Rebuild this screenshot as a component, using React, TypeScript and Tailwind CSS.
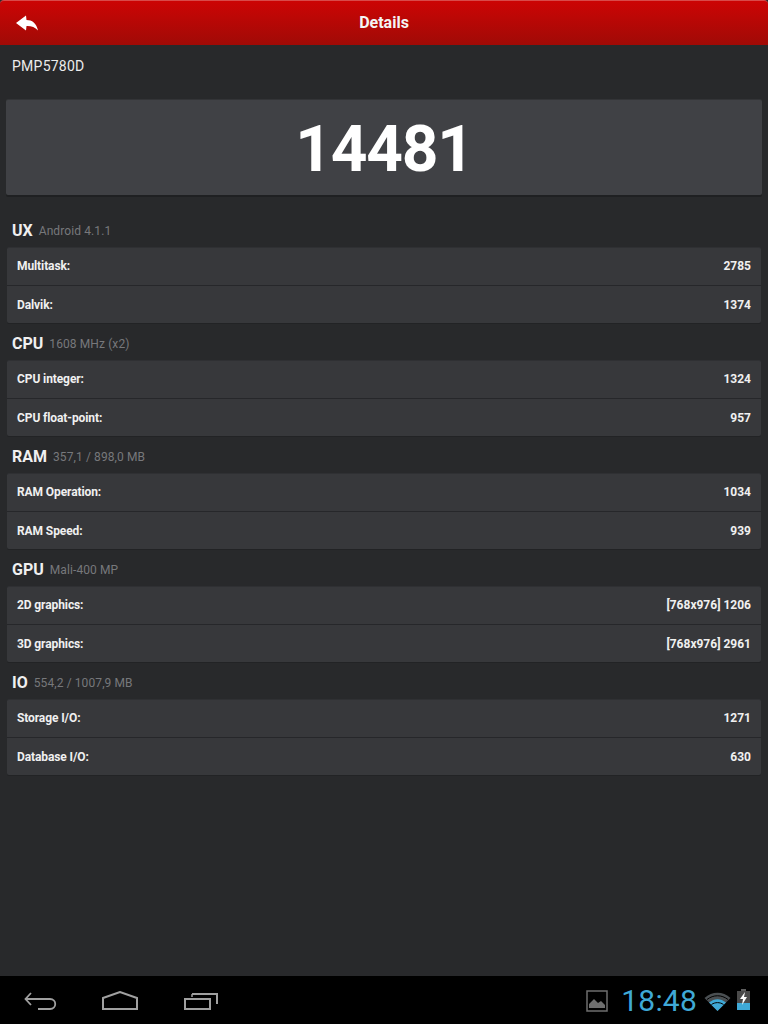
const sections = [
  {
    title: "UX",
    sub: "Android 4.1.1",
    rows: [
      ["Multitask:", "2785"],
      ["Dalvik:", "1374"],
    ],
  },
  {
    title: "CPU",
    sub: "1608 MHz (x2)",
    rows: [
      ["CPU integer:", "1324"],
      ["CPU float-point:", "957"],
    ],
  },
  {
    title: "RAM",
    sub: "357,1 / 898,0 MB",
    rows: [
      ["RAM Operation:", "1034"],
      ["RAM Speed:", "939"],
    ],
  },
  {
    title: "GPU",
    sub: "Mali-400 MP",
    rows: [
      ["2D graphics:", "[768x976] 1206"],
      ["3D graphics:", "[768x976] 2961"],
    ],
  },
  {
    title: "IO",
    sub: "554,2 / 1007,9 MB",
    rows: [
      ["Storage I/O:", "1271"],
      ["Database I/O:", "630"],
    ],
  },
];

function Section({ title, sub, rows }: (typeof sections)[number]) {
  return (
    <div>
      <div className="flex h-[37px] items-center gap-[6px] pl-3 pt-[5px]">
        <span className="text-[16px] font-bold text-[#f0f0f0]">{title}</span>
        <span className="text-[12px] tracking-[0.1px] text-[#77787b]">{sub}</span>
      </div>
      <div className="mx-[7px] rounded-[2px] border-t border-[#2f3033] bg-[#37383b] shadow-[0_1px_0_#222325]">
        {rows.map(([label, value], i) => (
          <div
            key={label}
            className={`flex items-center justify-between pl-[10px] pr-[10px] text-[12px] font-bold text-[#f0f0f0] ${
              i === 0 ? "h-[38px] border-b border-[#26272a] pb-[2px]" : "h-[37px]"
            }`}
          >
            <span className="tracking-[-0.1px]">{label}</span>
            <span>{value}</span>
          </div>
        ))}
      </div>
    </div>
  );
}

export default function App() {
  return (
    <div className="flex h-[1024px] w-[768px] flex-col overflow-hidden bg-[#28292b] font-['Roboto',sans-serif]">
      <div className="relative flex h-[45px] items-center justify-center rounded-t-[4px] border-t border-[#d84a4a] bg-gradient-to-b from-[#cc0404] to-[#a00a06]">
        <svg className="absolute left-[15px] top-[14px]" width="24" height="17" viewBox="0 0 24 17">
          <path d="M1 8 L11 0.5 L11.5 5 C17 5 21.5 8 23 15.5 C20 12 16 10.8 11.5 11 L11 15.5 Z" fill="#ffffff" />
        </svg>
        <span className="text-[16px] font-bold text-[#f4f4f4]">Details</span>
      </div>

      <div className="flex h-[55px] items-start pl-3 pt-[11px] text-[14px] tracking-[0.25px] text-[#ececec]">PMP5780D</div>

      <div className="mx-[6px] flex h-[95px] items-center justify-center rounded-[2px] bg-[#404145] pt-[5px] shadow-[0_-1px_0_#333437,0_2px_0_#1f2022]">
        <span className="text-[64px] font-bold tracking-[-1.2px] text-white">14481</span>
      </div>

      <div className="mt-[15px] flex flex-col">
        {sections.map((s) => (
          <Section key={s.title} {...s} />
        ))}
      </div>

      <div className="mt-auto flex h-[48px] items-center justify-between bg-black pl-[24px] pr-[17px] pt-[2px]">
        <div className="flex items-center gap-[44px]">
          <svg width="34" height="20" viewBox="0 0 34 20" fill="none" stroke="#a0a0a0" strokeWidth="1.8">
            <path d="M7 2 L1.5 8 L7 14 M1.5 8 H26 C33 8 33 18 26 18 H14" />
          </svg>
          <svg width="38" height="20" viewBox="0 0 38 20" fill="none" stroke="#a0a0a0" strokeWidth="2">
            <path d="M1 7 L18 1 L35 7 V18 H1 Z" />
          </svg>
          <svg width="35" height="20" viewBox="0 0 35 20" fill="none" stroke="#a0a0a0" strokeWidth="2">
            <path d="M1 8 H26 V18 H1 Z" />
            <path d="M8 3 H33 V13" />
            <path d="M8 3 V6" strokeWidth="1.5" />
          </svg>
        </div>
        <div className="flex items-center">
          <svg width="22" height="22" viewBox="0 0 22 22">
            <rect x="1" y="1" width="20" height="20" fill="none" stroke="#6e6e6e" strokeWidth="1.5" />
            <path d="M3 18 V14 L8 9 L12 13 L15 11 L19 15 V18 Z" fill="#6e6e6e" />
          </svg>
          <span className="ml-[13px] text-[30px] leading-none tracking-[0.2px] text-[#3fa9d6]">18:48</span>
          <svg className="ml-[7px]" width="27" height="21" viewBox="0 0 27 21" fill="none">
            <path d="M13.5 20 L0.5 7 C8 0 19 0 26.5 7 Z" fill="#4a4f52" />
            <path d="M13.5 20 L5 11.5 C10.5 7 16.5 7 22 11.5 Z" fill="#3fa9d6" />
            <path d="M3 8.5 C9.5 3.5 17.5 3.5 24 8.5" stroke="#000" strokeWidth="1" />
            <path d="M7.5 13.5 C11 11 16 11 19.5 13.5" stroke="#000" strokeWidth="1" />
          </svg>
          <svg className="mb-[3px] ml-[5px]" width="15" height="21" viewBox="0 0 15 21">
            <rect x="5" y="0" width="5" height="2" fill="#5e5e5e" />
            <rect x="1" y="2" width="13" height="19" fill="#4a4a4a" />
            <rect x="1" y="14" width="13" height="7" fill="#3fa9d6" />
            <path d="M9 3 L4 10 H7 L6 16 L11 8 H8 Z" fill="#fff" />
          </svg>
        </div>
      </div>
    </div>
  );
}
